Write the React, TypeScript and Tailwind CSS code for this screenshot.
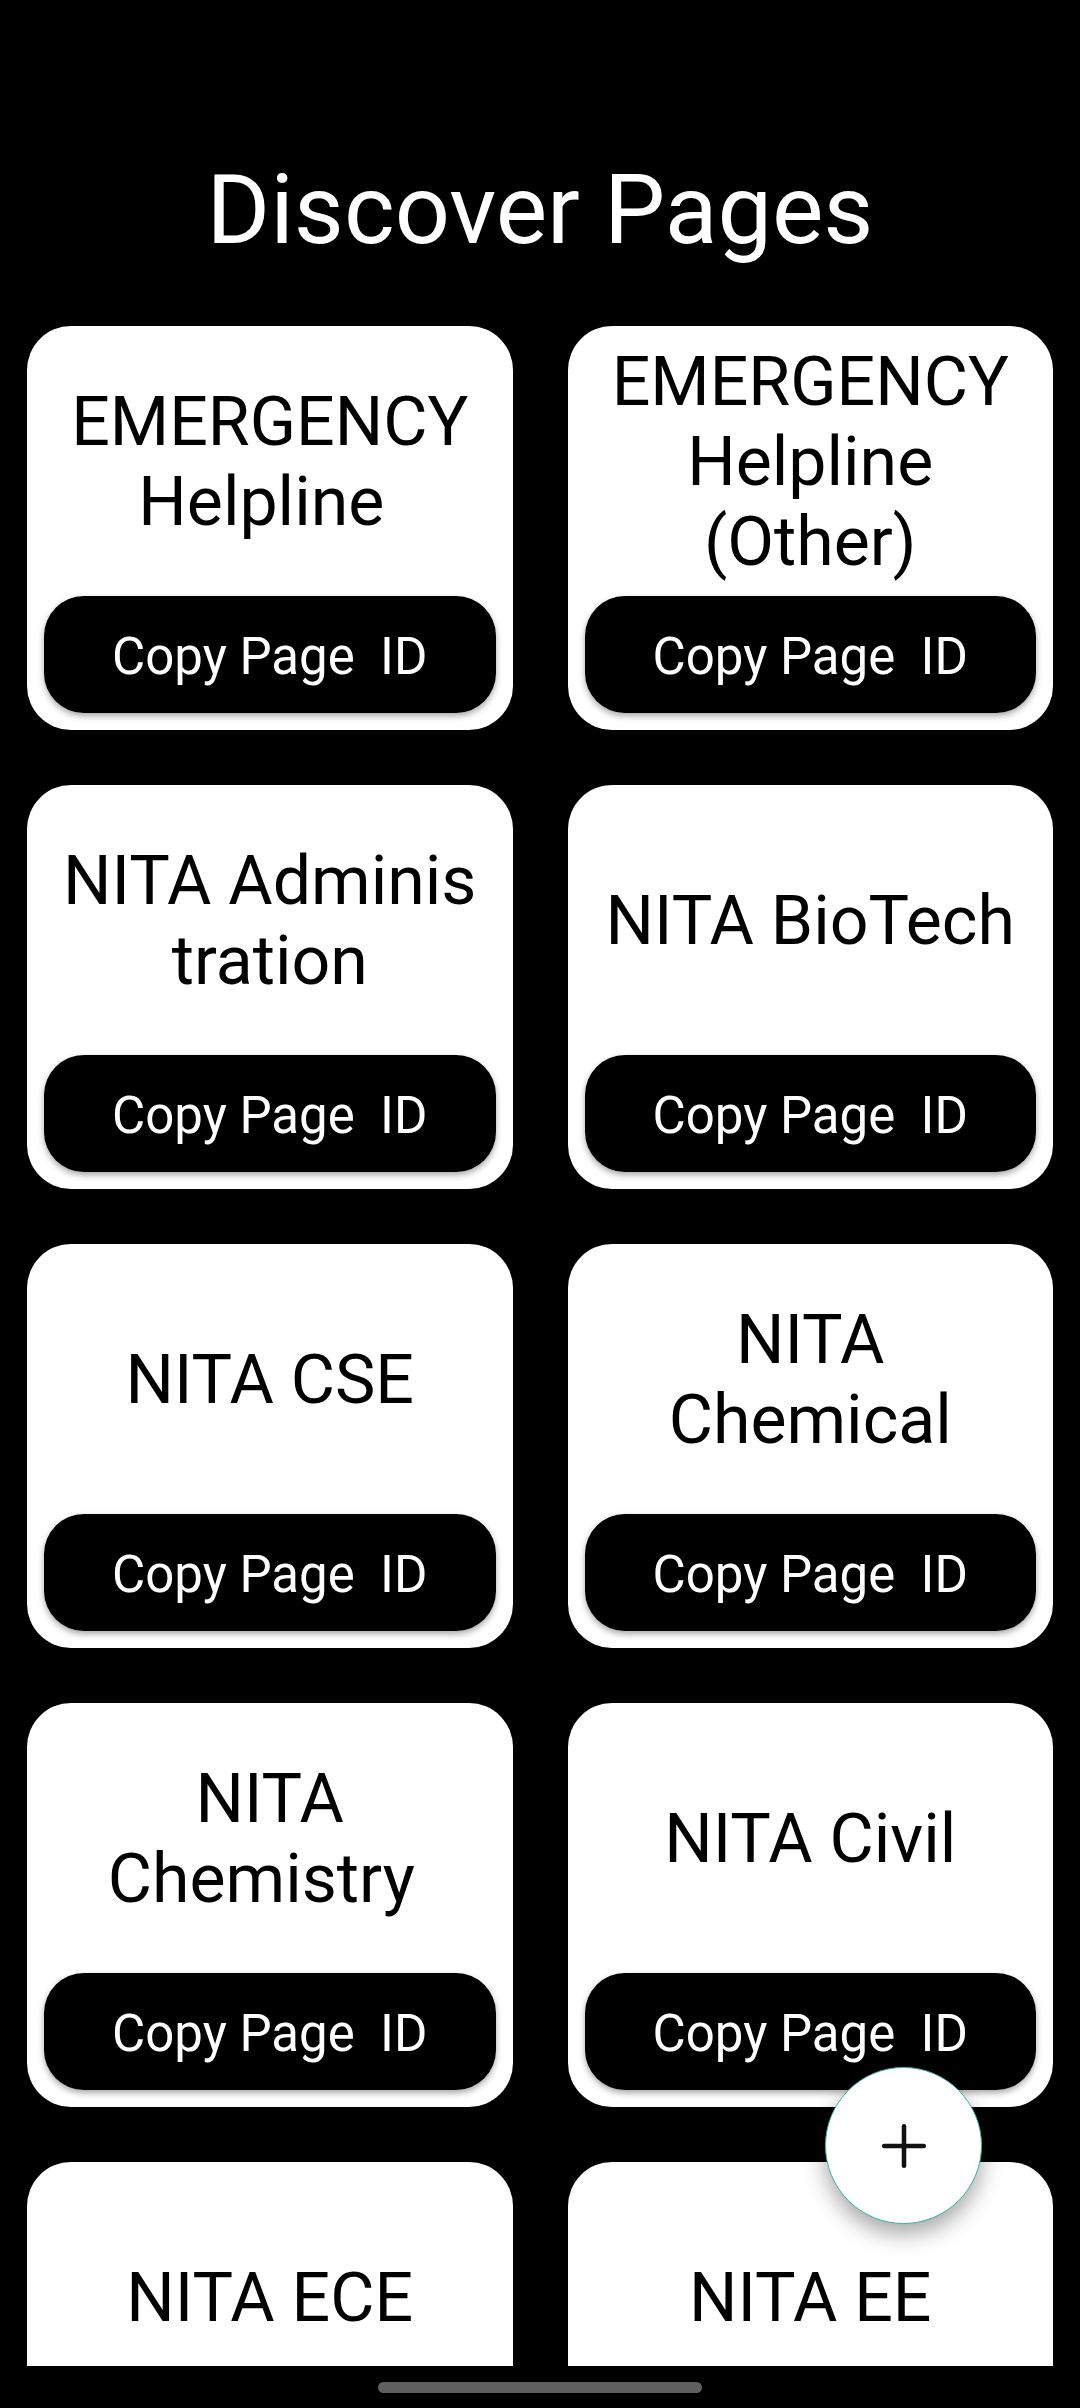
import { Plus } from 'lucide-react'

// title lines are fixed so the wrapping matches the device
const PAGES: string[][] = [
  ['EMERGENCY', 'Helpline '],
  ['EMERGENCY', 'Helpline', '(Other)'],
  ['NITA Adminis', 'tration'],
  ['NITA BioTech'],
  ['NITA CSE'],
  ['NITA', 'Chemical'],
  ['NITA', 'Chemistry '],
  ['NITA Civil'],
  ['NITA ECE'],
  ['NITA EE'],
]

function PageCard({ lines }: { lines: string[] }) {
  return (
    <div className="flex h-[404px] flex-col rounded-[44px] bg-white">
      {/* Page name */}
      <div className="flex flex-1 flex-col items-center justify-center pt-[2px] text-center">
        {lines.map((line, i) => (
          <span key={i} className="whitespace-pre text-[68px] leading-[80px] text-black">
            {line}
          </span>
        ))}
      </div>

      {/* Copy button */}
      <button className="mx-[17px] mb-[17px] flex h-[117px] shrink-0 items-center justify-center rounded-[40px] bg-black pt-[5px] text-[51px] whitespace-pre text-white shadow-[0_3px_6px_rgba(0,0,0,0.35)]">
        Copy Page  ID
      </button>
    </div>
  )
}

export default function App() {
  return (
    <div className="flex h-[2408px] w-[1080px] flex-col overflow-hidden bg-black font-[Roboto,sans-serif]">
      <div className="relative flex-1 overflow-hidden">
        <div className="pt-[153px]">
          <h1 className="text-center text-[97px] leading-[115px] font-normal text-white">
            Discover Pages
          </h1>

          <div className="mt-[58px] grid grid-cols-2 gap-x-[55px] gap-y-[55px] px-[27px]">
            {PAGES.map((lines, i) => (
              <PageCard key={i} lines={lines} />
            ))}
          </div>
        </div>

        {/* Floating add button */}
        <button className="absolute right-[98px] bottom-[142px] flex h-[157px] w-[157px] items-center justify-center rounded-full border border-[#35b5a8] bg-white text-[#111] shadow-[0_10px_22px_rgba(0,0,0,0.35)]">
          <Plus size={68} strokeWidth={1.6} />
        </button>
      </div>

      {/* System navigation bar */}
      <div className="flex h-[42px] shrink-0 items-center justify-center bg-black">
        <div className="h-[11px] w-[324px] rounded-full bg-[#5f5f5f]" />
      </div>
    </div>
  )
}
